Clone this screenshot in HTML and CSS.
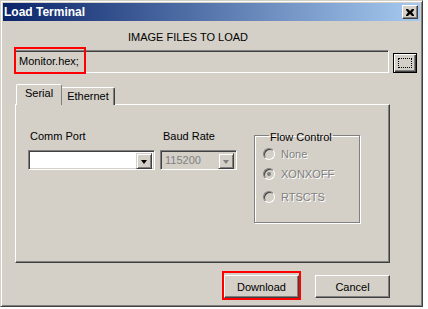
FILE: index.html
```html
<!DOCTYPE html>
<html lang="en">
<head>
    <meta charset="UTF-8">
    <title>Load Terminal</title>
    <link rel="stylesheet" href="styles.css">
</head>
<body>

<div class="window">
    <div class="titlebar">
        <span class="title">Load Terminal</span>
        <button class="close-btn">
            <svg width="8" height="7" viewBox="0 0 8 7"><path d="M0 0h2l2 2 2-2h2v1l-2 2.5 2 2.5v1h-2l-2-2-2 2h-2v-1l2-2.5-2-2.5z" fill="#000"/></svg>
        </button>
    </div>

    <div class="content">
        <div class="heading">IMAGE FILES TO LOAD</div>

        <div class="file-row">
            <div class="file-field">
                <span class="file-name">Monitor.hex;</span>
                <span class="mark mark-file"></span>
            </div>
            <button class="browse-btn"><span class="focus-dots"></span></button>
        </div>

        <div class="tabs">
            <div class="tab active">Serial</div>
            <div class="tab">Ethernet</div>
        </div>

        <div class="panel">
            <div class="field-group port-group">
                <label class="field-label">Comm Port</label>
                <div class="combo">
                    <span class="combo-text"></span>
                    <span class="combo-arrow"><span class="arrow"></span></span>
                </div>
            </div>
            <div class="field-group baud-group">
                <label class="field-label">Baud Rate</label>
                <div class="combo disabled">
                    <span class="combo-text">115200</span>
                    <span class="combo-arrow"><span class="arrow"></span></span>
                </div>
            </div>
            <fieldset class="flow-box">
                <legend>Flow Control</legend>
                <div class="radio"><span class="radio-dot"></span><span class="radio-text">None</span></div>
                <div class="radio"><span class="radio-dot checked"></span><span class="radio-text">XONXOFF</span></div>
                <div class="radio last"><span class="radio-dot"></span><span class="radio-text">RTSCTS</span></div>
            </fieldset>
        </div>

        <div class="actions">
            <div class="btn-wrap">
                <button class="btn">Download</button>
                <span class="mark mark-btn"></span>
            </div>
            <button class="btn">Cancel</button>
        </div>
    </div>
</div>

</body>
</html>
```

FILE: styles.css
```css
* {
    margin: 0;
    padding: 0;
    box-sizing: border-box;
    font-family: "Liberation Sans", Arial, sans-serif;
    font-size: 11px;
}

body {
    background: #ffffff;
}

button {
    font-family: inherit;
    color: #000;
}

.window {
    width: 423px;
    height: 307px;
    background: #d4d0c8;
    border: 1px solid;
    border-color: #d4d0c8 #404040 #404040 #d4d0c8;
    box-shadow: inset 1px 1px #ffffff, inset -1px -1px #808080;
    padding: 2px;
}

/* title bar */
.titlebar {
    height: 18px;
    display: flex;
    align-items: center;
    justify-content: space-between;
    padding: 0 2px 0 1px;
    background: linear-gradient(to right, #0a246a, #a6caf0);
}

.title {
    color: #fff;
    font-weight: bold;
    font-size: 12px;
}

.close-btn {
    width: 16px;
    height: 14px;
    display: flex;
    align-items: center;
    justify-content: center;
    background: #d4d0c8;
    border: 1px solid;
    border-color: #fff #404040 #404040 #fff;
    box-shadow: inset -1px -1px #808080;
}

/* body */
.content {
    padding: 0 0 0 11px;
}

.heading {
    margin: 10px 0 0 114px;
    line-height: 13px;
    color: #000;
}

.file-row {
    display: flex;
    align-items: flex-start;
    gap: 4px;
    margin-top: 6px;
}

.file-field {
    position: relative;
    width: 375px;
    height: 23px;
    border: 1px solid;
    border-color: #808080 #ffffff #ffffff #808080;
    box-shadow: inset 1px 1px #404040, inset -1px -1px #d4d0c8;
    padding: 4px 0 0 4px;
    line-height: 13px;
}

.mark {
    position: absolute;
    border: 2px solid #f00;
}

.mark-file {
    left: -1px;
    top: -4px;
    width: 72px;
    height: 27px;
}

.browse-btn {
    width: 24px;
    height: 20px;
    margin-top: 3px;
    background: #d4d0c8;
    border: 1px solid #000;
    box-shadow: inset 1px 1px #fff, inset -1px -1px #404040, inset -2px -2px #808080;
    display: flex;
    align-items: center;
    justify-content: center;
}

.focus-dots {
    width: 14px;
    height: 10px;
    border: 1px dotted #000;
}

/* tabs */
.tabs {
    display: flex;
    align-items: flex-end;
    margin: 11px 0 0 2px;
    height: 21px;
    position: relative;
    z-index: 1;
}

.tab {
    height: 18px;
    padding: 2px 5px 0 5px;
    line-height: 13px;
    border: 1px solid;
    border-bottom: none;
    border-color: #fff #404040 #fff #fff;
    box-shadow: inset -1px 0 #808080;
    border-radius: 2px 2px 0 0;
    background: #d4d0c8;
}

.tab.active {
    height: 21px;
    padding: 2px 8px 0 8px;
    margin-right: -1px;
    z-index: 2;
    position: relative;
    border-right-color: #808080;
    box-shadow: none;
}

.panel {
    width: 375px;
    height: 159px;
    margin-top: -1px;
    margin-left: 1px;
    border: 1px solid;
    border-color: #fff #404040 #404040 #fff;
    box-shadow: inset -1px -1px #808080;
    display: flex;
    align-items: flex-start;
    padding: 25px 0 0 12px;
}

.field-group {
    display: flex;
    flex-direction: column;
}

.field-label {
    line-height: 13px;
    padding-left: 2px;
    margin-bottom: 7px;
}

.port-group .combo {
    width: 127px;
}

.baud-group {
    margin-left: 5px;
}

.baud-group .field-label {
    padding-left: 3px;
}

.baud-group .combo {
    width: 77px;
}

.combo {
    height: 20px;
    display: flex;
    justify-content: space-between;
    background: #fff;
    border: 1px solid;
    border-color: #808080 #fff #fff #808080;
    box-shadow: inset 1px 1px #404040, inset -1px -1px #d4d0c8;
    padding: 2px;
}

.combo.disabled {
    background: #d4d0c8;
}

.combo-text {
    line-height: 14px;
    padding-left: 2px;
    color: #808080;
}

.combo-arrow {
    width: 16px;
    height: 16px;
    display: flex;
    align-items: center;
    justify-content: center;
    background: #d4d0c8;
    border: 1px solid;
    border-color: #d4d0c8 #404040 #404040 #d4d0c8;
    box-shadow: inset 1px 1px #fff, inset -1px -1px #808080;
}

.arrow {
    width: 0;
    height: 0;
    border-left: 3.5px solid transparent;
    border-right: 3.5px solid transparent;
    border-top: 4px solid #000;
    margin-top: 1px;
}

.combo.disabled .arrow {
    border-top-color: #808080;
}

/* flow control */
.flow-box {
    width: 106px;
    height: 96px;
    margin: -3px 0 0 17px;
    border: 1px solid #808080;
    box-shadow: inset 1px 1px #fff, 1px 1px #fff;
    padding: 0 0 0 8px;
}

.flow-box legend {
    margin-left: 6px;
    padding: 4px 1px 0 1px;
    line-height: 13px;
}

.radio {
    display: flex;
    align-items: center;
    gap: 6px;
    height: 20px;
}

.radio.last {
    margin-top: 3px;
}

.radio-dot {
    width: 12px;
    height: 12px;
    border-radius: 50%;
    border: 1px solid;
    border-color: #808080 #fff #fff #808080;
    background: #d4d0c8;
    box-shadow: inset 1px 1px #404040;
    display: flex;
    align-items: center;
    justify-content: center;
}

.radio-dot.checked::after {
    content: "";
    width: 4px;
    height: 4px;
    border-radius: 50%;
    background: #808080;
}

.radio-text {
    color: #808080;
    text-shadow: 1px 1px #fff;
    line-height: 13px;
}

/* buttons */
.actions {
    display: flex;
    gap: 16px;
    margin: 12px 0 0 210px;
}

.btn-wrap {
    position: relative;
}

.btn {
    width: 75px;
    height: 23px;
    background: #d4d0c8;
    border: 1px solid;
    border-color: #fff #404040 #404040 #fff;
    box-shadow: inset -1px -1px #808080;
    font-size: 11px;
}

.mark-btn {
    left: -2px;
    top: -4px;
    width: 79px;
    height: 29px;
}
```
